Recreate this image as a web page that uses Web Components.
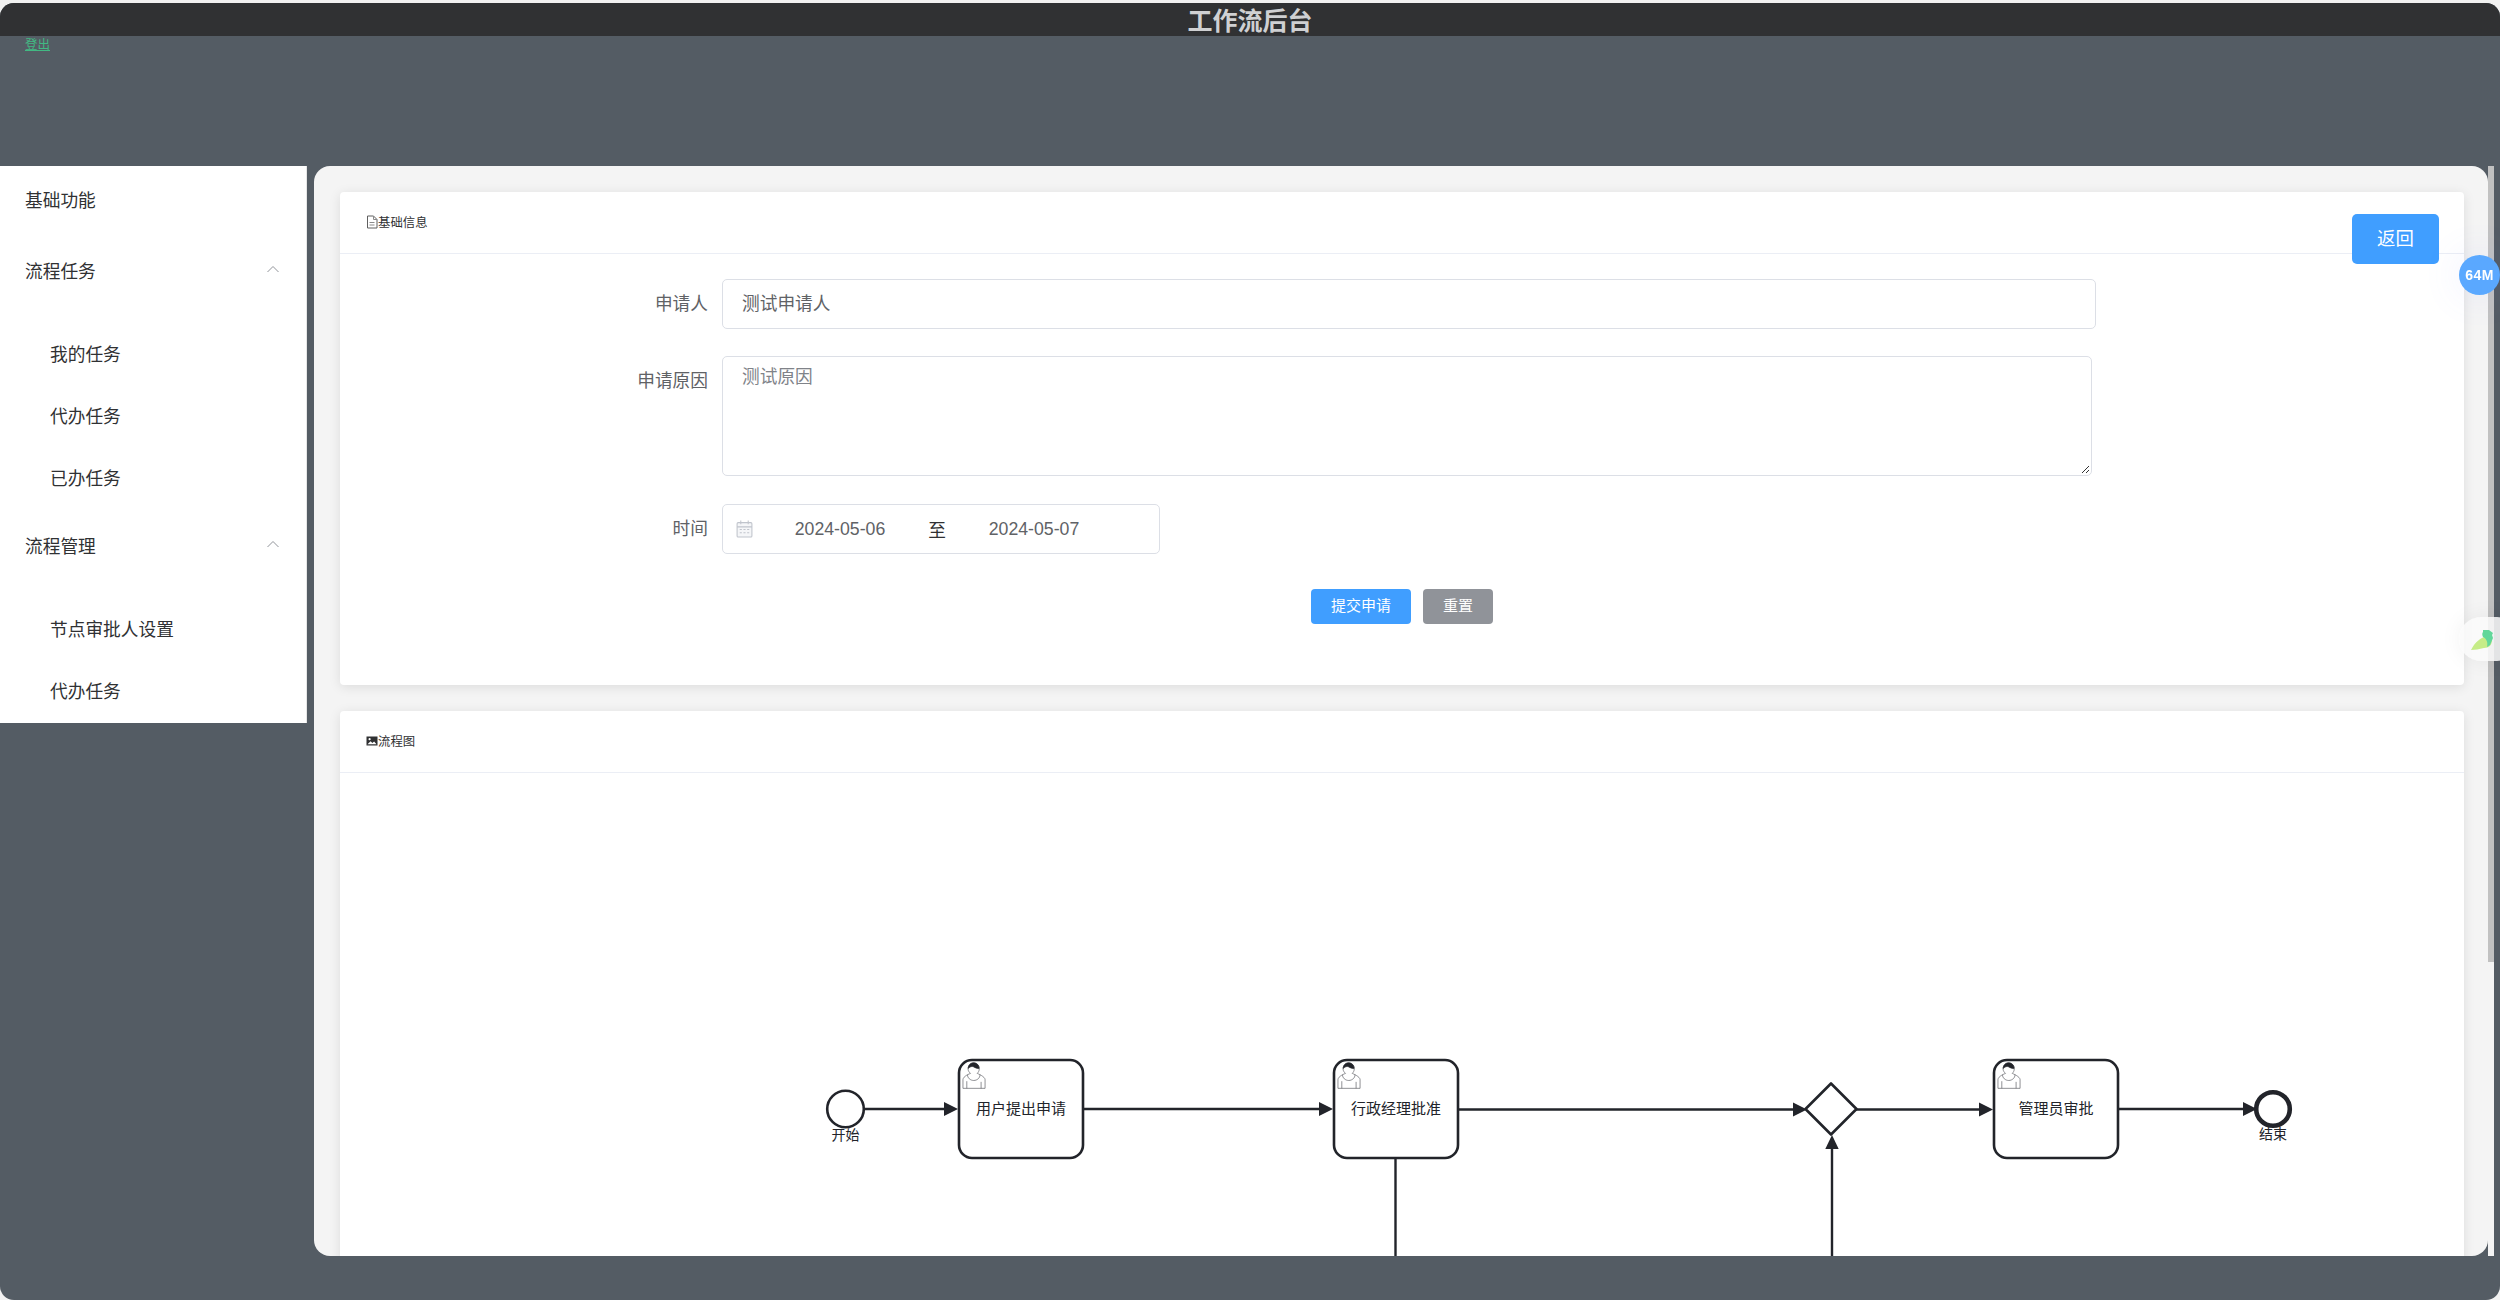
<!DOCTYPE html>
<html lang="zh-CN"><head><meta charset="utf-8"><title>工作流后台</title>
<style>
html,body{margin:0;padding:0;height:100%;overflow:hidden;background:#f1f1f1}
body{font-family:"Liberation Sans","Noto Sans CJK SC",sans-serif;padding-top:3px;box-sizing:border-box}
</style></head><body>
<wf-app>
  <wf-header slot="header">工作流后台</wf-header>
  <wf-sidebar slot="side"></wf-sidebar>
  <wf-card title="基础信息" icon="doc" style="height:493px">
    <wf-return></wf-return>
    <wf-form></wf-form>
  </wf-card>
  <wf-card title="流程图" icon="pic" style="height:800px;margin-top:26px">
    <wf-diagram></wf-diagram>
  </wf-card>
</wf-app>
<wf-floats></wf-floats>
<script>
function def(name,html){customElements.define(name,class extends HTMLElement{
  constructor(){super();this.attachShadow({mode:'open'}).innerHTML=typeof html==='function'?html(this):html;}
  connectedCallback(){ if(typeof html==='function'){this.shadowRoot.innerHTML=html(this);} }
});}

def('wf-app',`<style>
:host{display:flex;flex-direction:column;height:1297px;background:#545c64;border-radius:14px;overflow:hidden}
.logout{height:130px;padding-left:25px;box-sizing:border-box;font-size:12.5px;line-height:15px;padding-top:2px}
.logout a{color:#42b983;text-decoration:underline}
.row{display:flex;align-items:flex-start;height:1090px;gap:7px;padding-right:6px}
.main{flex:1;min-width:0;height:100%;display:flex}
.content{flex:1;min-width:0;height:100%;background:#f4f4f4;border-radius:16px;overflow:hidden;padding:26px 24px 0 26px;box-sizing:border-box}
.track{width:6px;height:100%;background:#f4f4f4;flex:none}
.thumb{height:796px;background:#c1c1c1}
</style>
<slot name="header"></slot>
<div class="logout"><a href="#">登出</a></div>
<div class="row"><slot name="side"></slot>
<div class="main"><div class="content"><slot></slot></div><div class="track"><div class="thumb"></div></div></div></div>`);

def('wf-header',`<style>:host{display:block;height:33px;background:#303133;color:#cfd0d2;text-align:center;font-weight:700;font-size:25px;line-height:36px;flex:none}</style><slot></slot>`);

const chev=`<svg width="12" height="8" viewBox="0 0 12 8"><polyline points="0.5,7 6,1.5 11.5,7" fill="none" stroke="#909399" stroke-width="1"/></svg>`;
def('wf-sidebar',`<style>
:host{display:block;width:307px;flex:none;background:#fff;border-right:1px solid #e6e6e6;box-sizing:border-box;color:#303133;font-size:17.7px}
.i{display:flex;align-items:center;justify-content:space-between;padding:0 27px 2px 25px;box-sizing:border-box}
.s{padding:0 0 2px 50px;box-sizing:border-box;height:62px;display:flex;align-items:center}
.a{height:68px}.b{height:74px}.c{height:76px}
.gap{height:14px}
.end{height:1px}
svg{display:block;margin-top:-2px}
</style>
<div class="i a"><span>基础功能</span></div>
<div class="i b"><span>流程任务</span>${chev}</div>
<div class="gap"></div>
<div class="s" style="height:63px">我的任务</div><div class="s">代办任务</div><div class="s" style="height:61px">已办任务</div>
<div class="i c"><span>流程管理</span>${chev}</div>
<div class="gap"></div>
<div class="s">节点审批人设置</div><div class="s">代办任务</div><div class="end"></div>`);

const docI=`<svg width="12" height="14" viewBox="0 0 12 14"><path d="M1.5 1h6l3.5 3.5V13H1.5z" fill="none" stroke="#5f5f5f" stroke-width="1"/><path d="M7.5 1v3.5H11M3.5 7.5h5M3.5 10h5" fill="none" stroke="#8a8a8a" stroke-width="1"/></svg>`;
const picI=`<svg width="12" height="12" viewBox="0 0 12 12"><rect x="0.5" y="1.5" width="11" height="9" fill="#303133"/><circle cx="3.6" cy="4.2" r="1.1" fill="#fff"/><path d="M1.5 9.3 4.6 6.2 6.4 8l1.7-1.6 2.4 2.9z" fill="#fff"/></svg>`;
def('wf-card',(h)=>`<style>
:host{display:block;background:#fff;border-radius:4px;box-shadow:0 2px 12px 0 rgba(0,0,0,.1);position:relative;box-sizing:border-box}
.h{height:62px;border-bottom:1px solid #ebeef5;box-sizing:border-box;padding:0 0 2px 26px;display:flex;align-items:center;font-size:12.4px;color:#303133}
svg{display:block;flex:none}
</style>
<div class="h">${h.getAttribute('icon')==='pic'?picI:docI}<span>${h.getAttribute('title')||''}</span></div>
<slot></slot>`);

def('wf-return',`<style>
:host{position:absolute;left:2012px;top:22px;width:87px;height:50px;box-sizing:border-box;padding-bottom:4px;background:#409eff;border-radius:5px;color:#fff;font-size:18.4px;display:flex;align-items:center;justify-content:center}
</style>返回`);

def('wf-form',`<style>
:host{display:block;padding-top:25px;font-size:17.7px;color:#606266}
.r{display:flex;margin-bottom:28px}
.l{width:382px;padding-right:14px;box-sizing:border-box;text-align:right;line-height:50px;height:50px;flex:none}
.f{border:1px solid #dcdfe6;border-radius:5px;box-sizing:border-box;background:#fff}
.inp{width:1374px;height:50px;line-height:48px;padding-left:19px}
.ta{position:relative;width:1370px;height:120px;padding:8px 19px;line-height:24px;color:#808389}
.ta svg{position:absolute;right:1px;bottom:1px}
.d{width:438px;height:50px;display:flex;align-items:center;padding-left:13px}
.ic{width:29px;flex:none;display:flex}
.v{width:150px;text-align:center;flex:none}
.sep{width:44px;text-align:center;color:#303133;flex:none}
.btns{display:flex;gap:12px;padding-left:971px;margin-top:35px}
.b{height:35px;line-height:34px;border-radius:4px;color:#fff;text-align:center;font-size:15px}
.p{width:100px;background:#409eff}.g{width:70px;background:#909399}
</style>
<div class="r" style="margin-bottom:27px"><div class="l">申请人</div><div class="f inp">测试申请人</div></div>
<div class="r"><div class="l">申请原因</div><div class="f ta">测试原因<svg width="9" height="9" viewBox="0 0 9 9"><path d="M1 8 8 1M5 8 8 5" stroke="#333" stroke-width="1" fill="none"/></svg></div></div>
<div class="r" style="margin-bottom:0"><div class="l">时间</div><div class="f d"><span class="ic"><svg width="17" height="18" viewBox="0 0 16 17"><rect x="1" y="2.5" width="14" height="13.5" rx="1" fill="#f5f6f8" stroke="#c0c4cc"/><path d="M1 6.5h14M4.5 0.5v3.5M11.5 0.5v3.5" stroke="#c0c4cc" fill="none"/><path d="M3.5 9h2M7 9h2M10.5 9h2M3.5 12h2M7 12h2M10.5 12h2" stroke="#c0c4cc" fill="none"/></svg></span><span class="v">2024-05-06</span><span class="sep">至</span><span class="v">2024-05-07</span></div></div>
<div class="btns"><div class="b p">提交申请</div><div class="b g">重置</div></div>`);

function person(x,y){return `<g transform="translate(${x-1.3} ${y-2.2}) scale(1.3)" stroke="#55575c" stroke-width=".5" fill="#fff"><path d="m 15,12 c 0.909,-0.845 1.594,-2.049 1.594,-3.385 0,-2.554 -1.805,-4.622 -4.357,-4.622 -2.552,0 -4.288,2.068 -4.288,4.622 0,1.348 0.974,2.562 1.896,3.405 -0.529,0.187 -5.669,2.097 -5.794,4.756 v 6.718 h 17 v -6.718 c 0,-2.298 -5.528,-4.595 -6.051,-4.776 zm -8,6 l 0,5.5 m 11,0 l 0,-5"/><path d="m 15,12 m 2.162,1.009 c 0,2.447 -2.158,4.431 -4.821,4.431 -2.665,0 -4.822,-1.981 -4.822,-4.431" fill="none"/><path d="m 15,12 m -6.9,-3.8 c 0,0 2.251,-2.358 4.274,-1.177 2.024,1.181 4.221,1.537 4.124,0.965 -0.098,-0.57 -0.117,-3.791 -4.191,-4.136 -3.575,0.001 -4.275,3.367 -4.208,4.348 z" fill="#22242a" stroke="#22242a"/></g>`}
function task(x,label){return `<rect x="${x}" y="1060" width="124" height="98" rx="13" fill="#fff" stroke="#22242a" stroke-width="2.6"/>${person(x,1060)}<text x="${x+62}" y="1108.5" class="t">${label}</text>`}
function arrowR(x1,x2,y){return `<path d="M${x1} ${y}H${x2-10}" stroke="#22242a" stroke-width="2.4" fill="none"/><path d="M${x2} ${y}l-14 -7v14z" fill="#22242a"/>`}
def('wf-diagram',`<style>:host{display:block;height:738px}svg{display:block}
.t{font:15px "Liberation Sans","Noto Sans CJK SC",sans-serif;fill:#22242a;text-anchor:middle;dominant-baseline:central}
.s{font-size:14px}</style>
<svg width="2124" height="738" viewBox="340 773 2124 738">
<circle cx="845.5" cy="1109" r="18.3" fill="#fff" stroke="#22242a" stroke-width="2.6"/>
<text x="845.5" y="1135" class="t s">开始</text>
${arrowR(865,958,1109)}
${task(959,'用户提出申请')}
${arrowR(1084,1333,1109)}
${task(1334,'行政经理批准')}
<path d="M1395.5 1159V1511" stroke="#22242a" stroke-width="2.4"/>
${arrowR(1459,1807,1109.5)}
<path d="M1831 1083.5 1856.5 1109 1831 1134.5 1805.5 1109z" fill="#fff" stroke="#22242a" stroke-width="2.6" stroke-linejoin="round"/>
<path d="M1832 1511V1146" stroke="#22242a" stroke-width="2.4"/>
<path d="M1832 1135l-6.7 14h13.4z" fill="#22242a"/>
${arrowR(1856,1993,1109.5)}
${task(1994,'管理员审批')}
${arrowR(2119,2257,1109)}
<circle cx="2273" cy="1109" r="16.8" fill="#fff" stroke="#22242a" stroke-width="4.6"/>
<text x="2273" y="1134" class="t s">结束</text>
</svg>`);

def('wf-floats',`<style>
:host{display:block}
.m{position:fixed;left:2459px;top:255px;width:41px;height:40px;border-radius:50%;background:#5aa8ff;color:#fff;font:700 14px/41px "Liberation Sans",sans-serif;letter-spacing:.4px;text-align:center;box-shadow:0 0 40px rgba(110,120,255,.12)}
.b{position:fixed;left:2459px;top:617px;width:60px;height:44px;border-radius:22px;background:rgba(250,250,250,.86);box-shadow:0 0 22px rgba(0,0,0,.06)}
.b svg{position:absolute;left:11px;top:12px}
</style>
<div class="m">64M</div>
<div class="b"><svg width="24" height="24" viewBox="0 0 24 24"><path d="M1 21C5 13 11 8 18 7l4 4c0 5-3 8-8 8-5 1-9 2-13 2z" fill="#c6ec87"/><path d="M13 1h6l4 3-1 2 1 3-3 7-3 2c1-4 0-8-4-10-1-2-1-4 0-5z" fill="#62d79a"/></svg></div>`);
</script>
</body></html>
